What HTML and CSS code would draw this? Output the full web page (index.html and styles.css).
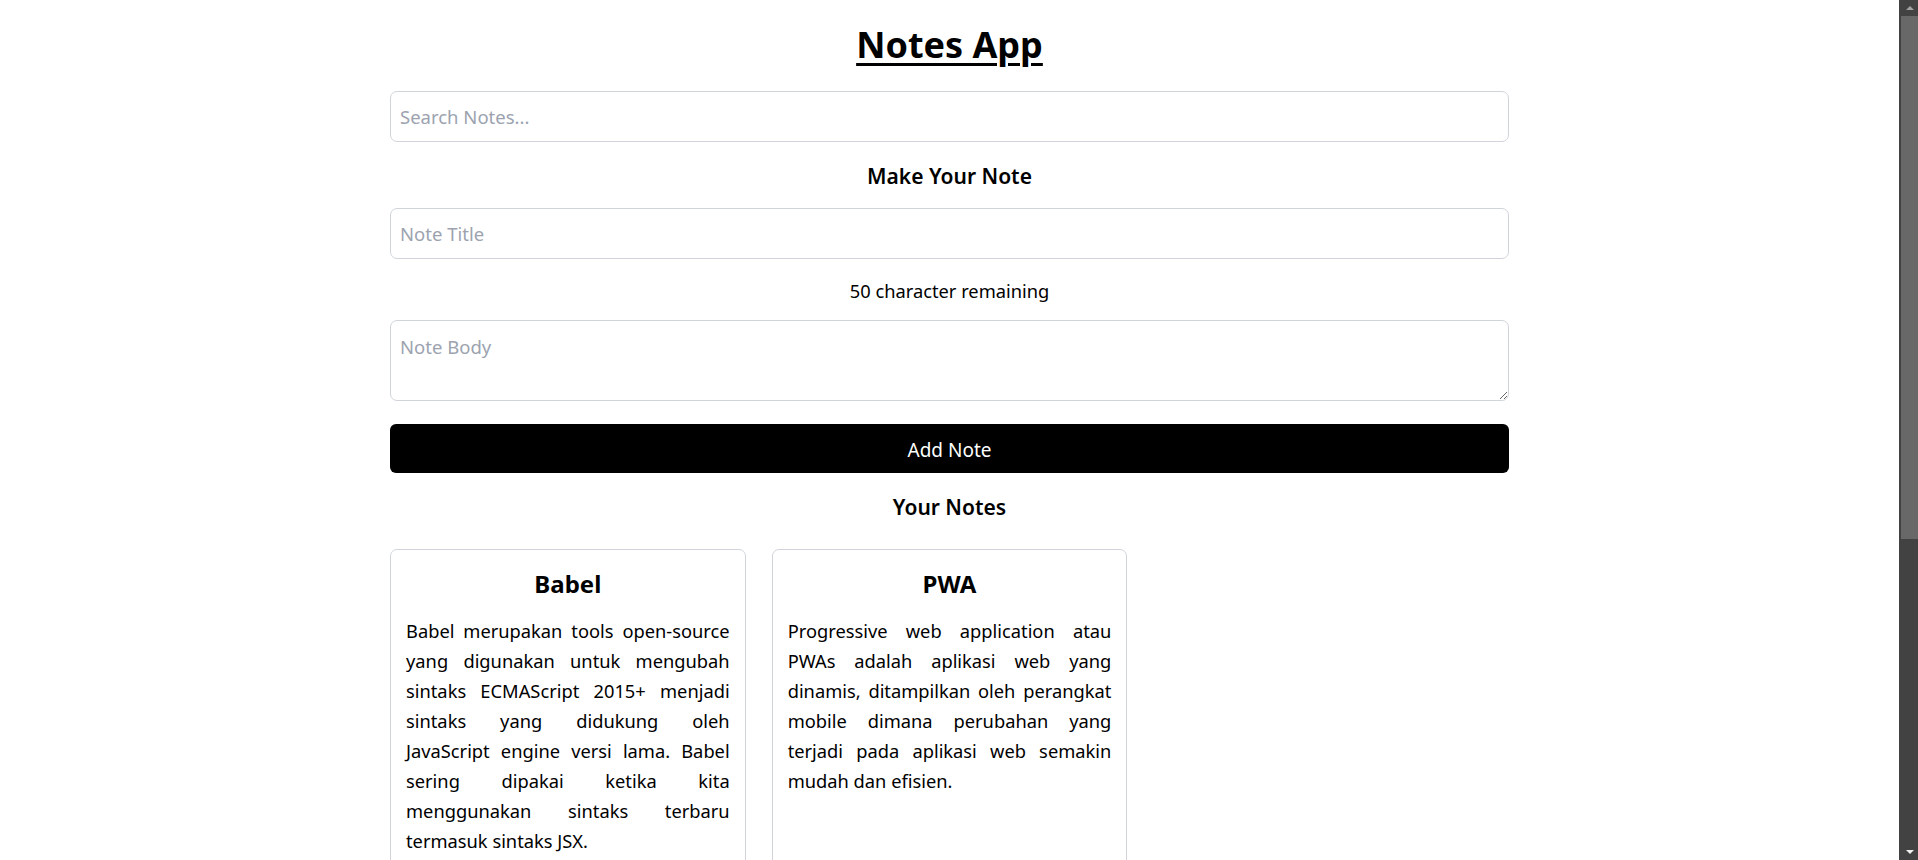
FILE: index.html
```html
<!DOCTYPE html>
<html lang="id">
<head>
<meta charset="utf-8">
<title>Notes App</title>
<link rel="stylesheet" href="styles.css">
</head>
<body>
<div class="screen">
  <div class="viewport">
    <main class="app">
      <h1 class="app-title">Notes App</h1>
      <input class="field search" type="text" placeholder="Search Notes...">
      <h2 class="section-title make">Make Your Note</h2>
      <input class="field note-title" type="text" placeholder="Note Title">
      <p class="counter">50 character remaining</p>
      <textarea class="field note-body" placeholder="Note Body"></textarea>
      <button class="add-btn" type="button">Add Note</button>
      <h2 class="section-title yours">Your Notes</h2>
      <section class="notes">
        <article class="card">
          <h3 class="card-title">Babel</h3>
          <p class="card-body">Babel merupakan tools open-source yang digunakan untuk mengubah sintaks ECMAScript 2015+ menjadi sintaks yang didukung oleh JavaScript engine versi lama. Babel sering dipakai ketika kita menggunakan sintaks terbaru termasuk sintaks JSX.</p>
        </article>
        <article class="card">
          <h3 class="card-title">PWA</h3>
          <p class="card-body">Progressive web application atau PWAs adalah aplikasi web yang dinamis, ditampilkan oleh perangkat mobile dimana perubahan yang terjadi pada aplikasi web semakin mudah dan efisien.</p>
        </article>
      </section>
    </main>
  </div>
  <div class="scrollbar">
    <div class="sb-btn sb-up"><span class="tri-up"></span></div>
    <div class="sb-track"><div class="sb-thumb"></div></div>
    <div class="sb-btn sb-down"><span class="tri-down"></span></div>
  </div>
</div>
</body>
</html>
```
FILE: styles.css
```css
html, body {
  margin: 0;
  padding: 0;
  height: 100%;
  background: #fff;
}
body {
  font-family: "Noto Sans", "Open Sans", sans-serif;
  color: #000;
}
.screen {
  display: flex;
  height: 860px;
  overflow: hidden;
}
.viewport {
  flex: 1;
  overflow: hidden;
}
.app {
  width: 1119px;
  margin: 0 auto;
  padding-top: 25px;
  display: flex;
  flex-direction: column;
}
.app-title {
  margin: 0;
  font-size: 36px;
  line-height: 40px;
  font-weight: 700;
  text-align: center;
  text-decoration: underline;
  text-underline-offset: 5px;
  text-decoration-thickness: 3px;
}
.field {
  box-sizing: border-box;
  width: 100%;
  border: 1px solid #d1d5db;
  border-radius: 7px;
  font-family: inherit;
  font-size: 18.5px;
  color: #000;
  padding: 0 9px;
  background: #fff;
  outline: none;
}
.field::placeholder {
  color: #9ca3af;
}
.search {
  margin-top: 26px;
  height: 51px;
}
.section-title {
  margin: 0;
  font-size: 21px;
  line-height: 28px;
  font-weight: 600;
  text-align: center;
}
.make {
  margin-top: 20px;
}
.note-title {
  margin-top: 18px;
  height: 51px;
}
.counter {
  margin: 18px 0 0;
  font-size: 18.3px;
  line-height: 28px;
  text-align: center;
}
.note-body {
  margin-top: 15px;
  height: 81px;
  padding-top: 13px;
  resize: vertical;
  display: block;
}
.add-btn {
  margin-top: 23px;
  height: 49px;
  padding: 2px 0 0;
  border: none;
  border-radius: 6px;
  background: #000;
  color: #fff;
  font-family: inherit;
  font-size: 19px;
}
.yours {
  margin-top: 20px;
}
.notes {
  margin-top: 28px;
  display: grid;
  grid-template-columns: repeat(3, 1fr);
  gap: 26px;
}
.card {
  border: 1px solid #d1d5db;
  border-radius: 7px;
  padding: 16px 15px;
}
.card-title {
  margin: 0;
  font-size: 24px;
  line-height: 36px;
  font-weight: 700;
  text-align: center;
}
.card-body {
  margin: 14px 0 0;
  font-size: 18.3px;
  line-height: 30px;
  text-align: justify;
}

/* fake scrollbar */
.scrollbar {
  width: 19px;
  background: #424242;
  display: flex;
  flex-direction: column;
}
.sb-btn {
  height: 16px;
  display: flex;
  align-items: center;
  justify-content: center;
  padding-left: 2px;
}
.sb-track {
  flex: 1;
  padding-left: 2px;
}
.sb-thumb {
  height: 523px;
  background: #686868;
}
.tri-up {
  width: 0;
  height: 0;
  border-left: 4px solid transparent;
  border-right: 4px solid transparent;
  border-bottom: 4px solid #a3a3a3;
}
.tri-down {
  width: 0;
  height: 0;
  border-left: 4px solid transparent;
  border-right: 4px solid transparent;
  border-top: 4px solid #f0f0f0;
}
```
